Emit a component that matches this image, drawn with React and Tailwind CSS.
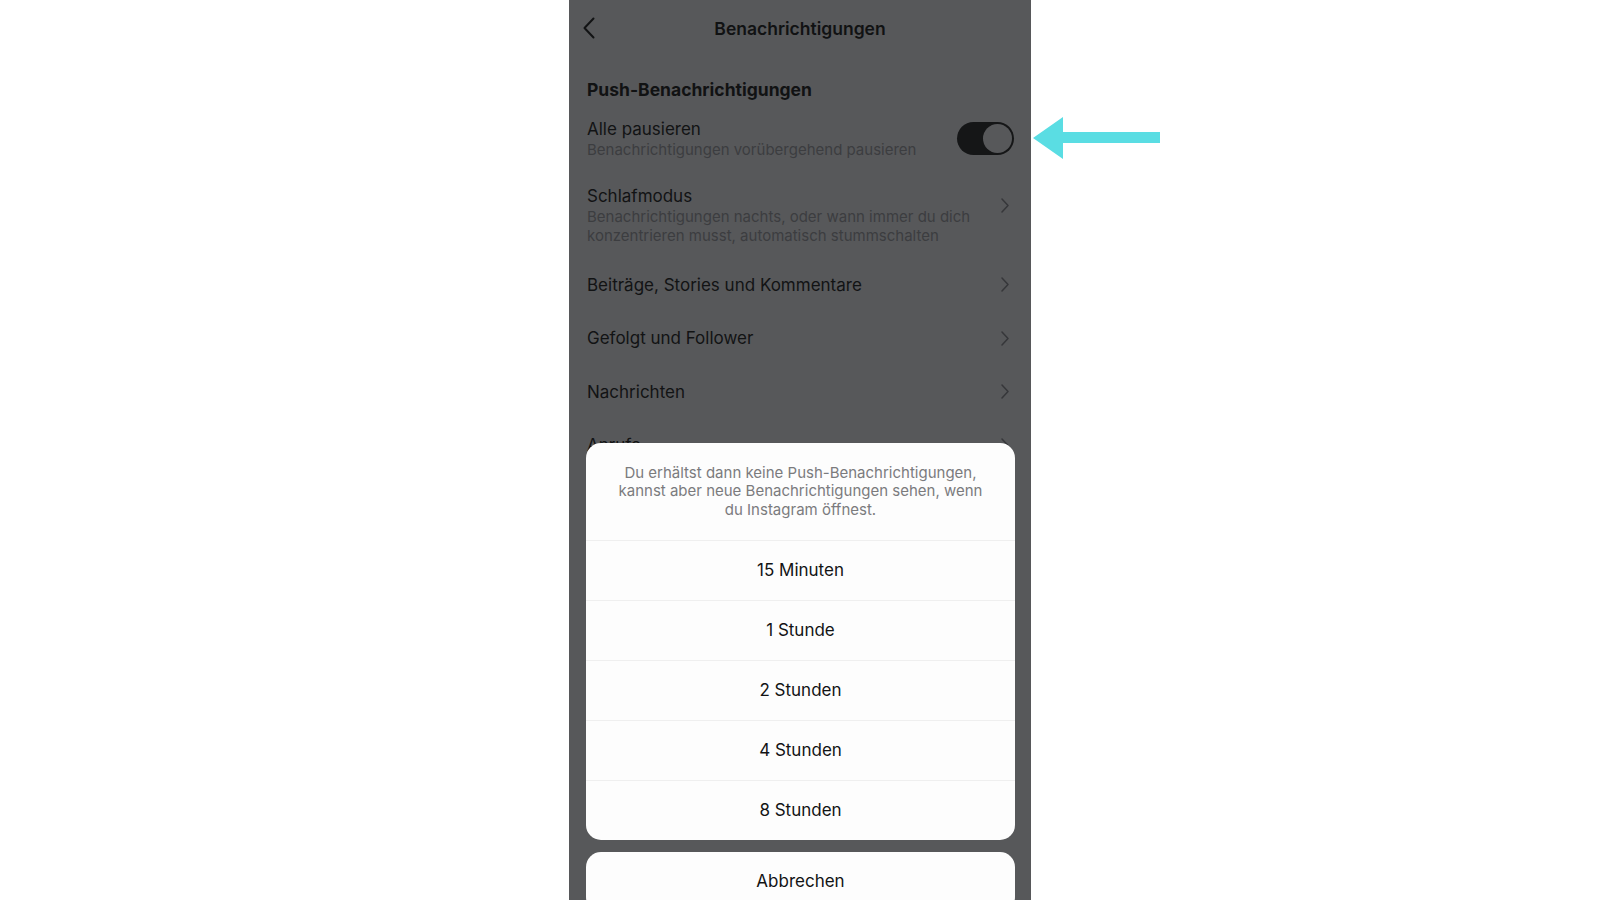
import React from "react";

const font = { fontFamily: "Inter, 'Liberation Sans', sans-serif" };

function Chevron({ className = "" }) {
  return (
    <svg width="8" height="15" viewBox="0 0 8 15" className={className}>
      <path d="M1 1 L7 7.5 L1 14" fill="none" stroke="#36373a" strokeWidth="1.5" strokeLinecap="round" strokeLinejoin="round" />
    </svg>
  );
}

function NavRow({ label }) {
  return (
    <div className="h-[53.5px] flex items-center justify-between">
      <span className="text-[17px] leading-[22px] text-[#121314]">{label}</span>
      <Chevron className="mr-[4px]" />
    </div>
  );
}

const durations = ["15 Minuten", "1 Stunde", "2 Stunden", "4 Stunden", "8 Stunden"];

export default function App() {
  return (
    <div className="min-h-[900px] bg-white flex justify-center" style={font}>
      <div className="relative w-[462px] h-[900px] bg-[#57585a] overflow-hidden">
        {/* top bar */}
        <div className="relative h-[57px] pt-[1px] flex items-center justify-center">
          <svg width="12" height="22" viewBox="0 0 12 22" className="absolute left-[14px] top-[17px]">
            <path d="M10.5 1.5 L1.5 11 L10.5 20.5" fill="none" stroke="#121314" strokeWidth="2" strokeLinecap="round" strokeLinejoin="round" />
          </svg>
          <h1 className="text-[17.5px] font-semibold text-[#111213]">Benachrichtigungen</h1>
        </div>

        <div className="px-[18px]">
          <h2 className="mt-[22px] h-[22px] text-[17.5px] leading-[22px] font-bold text-[#111213]">Push-Benachrichtigungen</h2>

          <div className="mt-[17px] flex items-center justify-between">
            <div>
              <div className="text-[17px] leading-[22px] text-[#121314]">Alle pausieren</div>
              <div className="text-[15px] leading-[19px] text-[#3c3d40]">Benachrichtigungen vorübergehend pausieren</div>
            </div>
            <div className="w-[57px] h-[33px] rounded-full bg-[#151617] flex items-center justify-end pr-[2px] mr-[-1px]">
              <div className="w-[29px] h-[29px] rounded-full bg-[#57585a]" />
            </div>
          </div>

          <div className="mt-[27px] flex items-start justify-between">
            <div>
              <div className="text-[17px] leading-[21px] text-[#121314]">Schlafmodus</div>
              <div className="text-[15px] leading-[19px] text-[#3c3d40]">
                Benachrichtigungen nachts, oder wann immer du dich
                <br />
                konzentrieren musst, automatisch stummschalten
              </div>
            </div>
            <Chevron className="mt-[12px] mr-[4px]" />
          </div>

          <div className="mt-[13px]">
            <NavRow label="Beiträge, Stories und Kommentare" />
            <NavRow label="Gefolgt und Follower" />
            <NavRow label="Nachrichten" />
            <NavRow label="Anrufe" />
          </div>
        </div>

        {/* pause duration sheet */}
        <div className="absolute top-[443px] left-[17px] right-[16px] flex flex-col gap-[12px]">
          <div className="bg-[#fdfdfd] rounded-[15px] overflow-hidden">
            <div className="h-[97px] flex items-center justify-center text-center text-[15px] leading-[18.5px] text-[#7b7b7d]">
              <p>
                Du erhältst dann keine Push-Benachrichtigungen,
                <br />
                kannst aber neue Benachrichtigungen sehen, wenn
                <br />
                du Instagram öffnest.
              </p>
            </div>
            {durations.map((d) => (
              <div key={d} className="h-[60px] border-t border-[#efefef] flex items-center justify-center text-[17px] text-[#121314]">
                {d}
              </div>
            ))}
          </div>
          <div className="h-[60px] bg-[#fdfdfd] rounded-[15px] flex items-center justify-center text-[17px] text-[#121314]">
            Abbrechen
          </div>
        </div>
      </div>

      {/* pointer arrow */}
      <svg width="130" height="44" viewBox="0 0 130 44" className="absolute left-[1032px] top-[116px]">
        <polygon points="1,22 31,1 31,16 128,16 128,27 31,27 31,43" fill="#5adde3" />
      </svg>
    </div>
  );
}
